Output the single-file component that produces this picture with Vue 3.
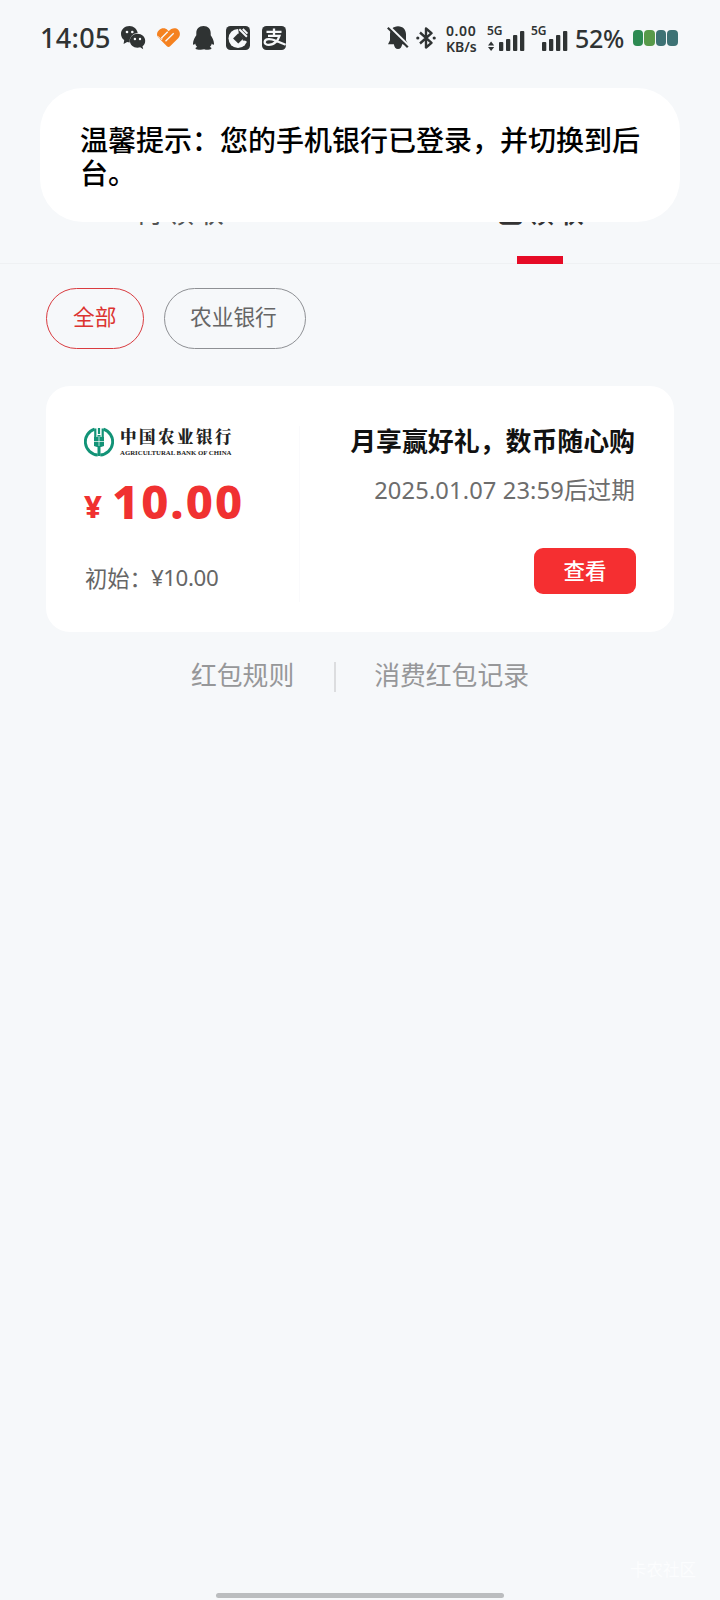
<script setup>
const filters = [
  { label: '全部', active: true },
  { label: '农业银行', active: false },
]
const batteryCells = ['#2d8a52', '#589a49', '#3d7274', '#3d7274']
</script>

<template>
  <div class="screen">
    <header class="status">
      <span class="clock">14:05</span>
      <svg class="wechat" width="25" height="24" viewBox="0 0 25 24">
        <path fill="#2f3333" d="M8.500 0C3.700 0 0 3.500 0 7.900c0 2.600 1.300 4.700 3.200 6.100L2.600 18l3.500-2 2.600.5A8 8 0 0 1 16.700 7.100C16 2.900 12.700 0 8.500 0Z" />
        <path fill="#2f3333" d="M16.500 7.800c-4.300 0-7.600 3-7.600 6.900s3.300 7 7.600 7l2.700-.4 3 1.900-.7-2.900c1.700-1.300 2.700-3.300 2.700-5.600 0-3.900-3.400-6.900-7.700-6.900Z" />
        <g fill="#f6f8fa"><circle cx="6" cy="6" r="1.300" /><circle cx="11.300" cy="6" r="1.300" /><circle cx="13.900" cy="13" r="1.200" /><circle cx="19" cy="13" r="1.200" /></g>
      </svg>
      <svg class="heart" width="24" height="20" viewBox="0 0 24 20">
        <path fill="#f58220" d="M2.200 2C4.500-.2 8.500-.3 10.700 2.300l1 1C14 .3 18.500-.8 21.200 1.800c2.300 2.300 2.200 6.100 0 8.400l-8.100 8c-1 1-2.200 1-3.200 0L6.200 14.500 3.500 11.800.9 9c-1.600-2-1-5 1.300-7Z" />
        <path d="M10.700 3.800 4.200 10.300M16.700 5.300 8.500 13.300" fill="none" stroke="#f6f8fa" stroke-width="1.300" />
        <path d="m.8 8.200 3.200 3.200 1.500-.6" fill="none" stroke="#f6f8fa" stroke-width="1" />
      </svg>
      <svg class="qq" width="21" height="24" viewBox="0 0 21 24">
        <path fill="#2f3333" d="M10.500 0C5.900 0 3.300 3 3.300 7v2.300C1.700 11.800-.1 14.800 0 18.100c.1 1.200 1 1 2.100-.7.400 1.600 1.200 2.700 2.100 3.500-1.500.4-2 1.300-1.400 2.100.8.900 6.300 1 7.700.3 1.400.7 6.900.6 7.700-.3.600-.8.100-1.700-1.400-2.100.9-.8 1.700-1.900 2.100-3.500 1.100 1.700 2 1.900 2.100.7.100-3.300-1.700-6.300-3.300-8.800V7c0-4-2.600-7-7.200-7Z" />
      </svg>
      <svg class="ccb" width="24" height="24" viewBox="0 0 24 24">
        <rect width="24" height="24" rx="4.500" fill="#2f3333" />
        <circle cx="12" cy="12.500" r="9.500" fill="#f6f8fa" />
        <path d="m12.300 7.200 5.200 5.200-5.200 5.200-5.200-5.200Z" fill="#2f3333" />
        <path d="M12 2.500h10v14.200L17 12.400l-4-4Z" fill="#2f3333" />
        <path d="M16.800 13.500h6" stroke="#2f3333" stroke-width="2.200" />
        <path d="m13.300 3.200 7.600 7.600M16.800 3l4.600 4.600" stroke="#f6f8fa" stroke-width="2" />
      </svg>
      <svg class="alipay" width="24" height="24" viewBox="0 0 24 24">
        <rect width="24" height="24" rx="4.500" fill="#2f3333" />
        <path d="M4.500 5.800h15M12 2.500v7M6 9.800h11.500c-1.200 4.200-5 9.100-10.700 9.100-2.200 0-4.300-1-4.100-3 .3-3.800 6.600-3.300 10.500-1.400l10.500 4.300" fill="none" stroke="#f6f8fa" stroke-width="2.300" />
      </svg>
      <svg class="bell" width="22" height="24" viewBox="0 0 22 24">
        <path fill="#2f3333" d="M11 .2c5 0 8 3.600 8 8v6.100l2 4H1l2-4V8.200c0-4.400 3-8 8-8ZM6.800 18h8.400c-.4 3-1.900 5-4.200 5s-3.800-2-4.200-5Z" />
        <path d="M2.500 .8 22 20" stroke="#f6f8fa" stroke-width="2.400" />
        <path d="m.8 1.700 20 19.500" stroke="#2f3333" stroke-width="2.200" />
      </svg>
      <svg class="bluetooth" width="20" height="22" viewBox="0 0 20 22">
        <path d="m4 5.500 11.500 10.300-5.500 4.700V1.500l5.500 4.700L4 16.500" fill="none" stroke="#2f3333" stroke-width="2.400" stroke-linejoin="round" />
        <circle cx="1.800" cy="11" r="1.600" fill="#2f3333" /><circle cx="18.200" cy="11" r="1.600" fill="#2f3333" />
      </svg>
      <div class="speed"><span class="rate">0.00</span><span>KB/s</span></div>
      <div class="signal">
        <span>5G</span>
        <svg width="37" height="21" viewBox="0 0 37 21">
          <path d="m0 15.500 3.100-4 3.100 4ZM0 17l3.100 4 3.100-4Z" fill="#2f3333" />
          <g fill="#2f3333"><rect x="11" y="12" width="4.300" height="9" rx="1" /><rect x="18" y="9" width="4.300" height="12" rx="1" /><rect x="25" y="5" width="4.300" height="16" rx="1" /><rect x="32" y="1" width="4.300" height="20" rx="1" /></g>
        </svg>
      </div>
      <div class="signal second">
        <span>5G</span>
        <svg width="37" height="21" viewBox="0 0 37 21">
          <g fill="#2f3333"><rect x="11" y="12" width="4.300" height="9" rx="1" /><rect x="18" y="9" width="4.300" height="12" rx="1" /><rect x="25" y="5" width="4.300" height="16" rx="1" /><rect x="32" y="1" width="4.300" height="20" rx="1" /></g>
        </svg>
      </div>
      <span class="percent">52%</span>
      <div class="battery"><i v-for="(c, i) in batteryCells" :key="i" :style="{ background: c }"></i></div>
    </header>

    <nav class="tabs">
      <div class="tab">待领取</div>
      <div class="tab active">已领取</div>
    </nav>

    <div class="filters">
      <div v-for="f in filters" :key="f.label" class="chip" :class="{ active: f.active }">{{ f.label }}</div>
    </div>

    <section class="card">
      <div class="left">
        <div class="bank">
          <svg width="30" height="30" viewBox="0 0 30 30">
            <g fill="none" stroke="#129377">
              <path stroke-width="2.900" d="M10.500 2.100A13.300 13.300 0 0 0 13.700 28M19.500 2.100A13.300 13.300 0 0 1 16.300 28" />
              <path stroke-width="2.200" d="M15 1v6M11.300 1.500v8.500M18.700 1.500v8.500" />
              <path stroke-width="3" d="M15 8v21" />
            </g>
            <path fill="#129377" d="M10 10h10v9l-3 1h-4l-3-1Z" />
            <path d="M10 14.500h10M15 9v10" stroke="#fff" stroke-width=".7" />
          </svg>
          <div class="bank-name"><b>中国农业银行</b><small>AGRICULTURAL BANK OF CHINA</small></div>
        </div>
        <div class="amount"><span class="yen">¥</span><span class="num">10.00</span></div>
        <div class="initial"><span>初始：</span><span class="value">¥10.00</span></div>
      </div>
      <div class="right">
        <h2>月享赢好礼，数币随心购</h2>
        <p><span>2025.01.07 23:59</span>后过期</p>
        <button>查看</button>
      </div>
    </section>

    <div class="links"><span>红包规则</span><i></i><span>消费红包记录</span></div>

    <div class="toast">温馨提示：您的手机银行已登录，并切换到后台。</div>
    <div class="watermark">卡农社区</div>
    <div class="home"></div>
  </div>
</template>

<style>
body { background: #f6f8fa; }
</style>
<style scoped>
* { box-sizing: border-box; }
.screen { position: relative; width: 720px; height: 1600px; overflow: hidden; background: #f6f8fa; font-family: "Noto Sans CJK SC", sans-serif; color: #2f3333; }
.status { height: 76px; display: flex; align-items: flex-start; padding-left: 40px; font-family: "Noto Sans", sans-serif; }
.status > * { flex: none; }
.clock { width: 70px; margin-top: 20px; font-size: 27px; line-height: 36px; font-weight: 550; letter-spacing: .3px; }
.wechat { margin: 26px 0 0 11px; }
.heart { margin: 28px 0 0 11px; }
.qq { margin: 26px 0 0 12px; }
.ccb { margin: 26px 0 0 12px; }
.alipay { margin: 26px 0 0 12px; }
.bell { margin: 26px 0 0 101px; }
.bluetooth { margin: 27px 0 0 7px; }
.speed { width: 34px; margin: 23px 0 0 10px; font-size: 14px; font-weight: 650; line-height: 15.500px; display: flex; flex-direction: column; white-space: nowrap; }
.rate { letter-spacing: .6px; }
.signal { position: relative; width: 37px; height: 21px; margin: 30px 0 0 8px; }
.signal svg { display: block; }
.signal span { position: absolute; left: -1px; top: -6px; font-size: 12px; line-height: 14px; font-weight: 600; }
.signal.second { margin-left: 6px; }
.signal.second span { left: 0; }
.percent { width: 50px; margin: 20px 0 0 7px; font-size: 25px; line-height: 36px; font-weight: 500; letter-spacing: -.3px; }
.battery { display: flex; gap: 1px; margin: 30px 0 0 8px; }
.battery i { width: 10.400px; height: 16px; border-radius: 4px; }
.tabs { height: 188px; display: flex; align-items: flex-end; border-bottom: 1px solid #eff1f3; }
.tab { position: relative; width: 360px; height: 76px; text-align: center; font-size: 29px; line-height: 46px; letter-spacing: 1px; color: #555; }
.tab.active { font-weight: 500; color: #333; }
.tab.active::after { content: ""; position: absolute; left: 157px; bottom: -1px; width: 46px; height: 8px; background: #e60b26; }
.filters { display: flex; gap: 20px; padding: 24px 0 0 46px; }
.chip { height: 61px; border: 1px solid #8e9094; border-radius: 31px; padding: 0 25px; font-size: 21.700px; line-height: 54px; color: #666; width: 142px; white-space: nowrap; }
.chip.active { width: 98px; padding-left: 26px; border-color: #d93c40; color: #dc3430; }
.card { display: flex; width: 628px; height: 246px; margin: 37px 0 0 46px; border-radius: 24px; background: #fff; }
.left { position: relative; width: 254px; padding: 41px 0 0 38px; }
.left::after { content: ""; position: absolute; right: 0; top: 40px; width: 1px; height: 176px; background: #fafafc; }
.bank { display: flex; gap: 6px; height: 31px; }
.bank-name { display: flex; flex-direction: column; color: #222; }
.bank-name b { font-family: "Noto Serif CJK SC", "Noto Sans CJK SC", serif; font-weight: 900; font-size: 16.500px; letter-spacing: 2.500px; line-height: 20px; margin-top: -1px; white-space: nowrap; }
.bank-name small { font: bold 6.800px/8px "Liberation Serif", serif; margin-top: 3px; white-space: nowrap; }
.amount { display: flex; align-items: baseline; height: 64px; margin-top: 11px; color: #f03131; font-family: "Noto Sans", sans-serif; font-weight: 800; }
.yen { width: 28px; font-size: 31px; position: relative; left: 0; top: -1px; }
.num { font-size: 47px; line-height: 64px; letter-spacing: 2px; }
.initial { display: flex; margin-top: 29px; padding-left: 1px; font-size: 22.300px; line-height: 32px; color: #666; white-space: nowrap; }
.initial span:first-child { position: relative; top: -1px; }
.initial .value { font-family: "Noto Sans", sans-serif; letter-spacing: -.4px; margin-left: -1px; }
.right { width: 374px; padding: 35px 39px 0 0; display: flex; flex-direction: column; align-items: flex-end; }
h2 { margin: 0; font-size: 25.900px; line-height: 38px; font-weight: 700; color: #111; white-space: nowrap; }
p { margin: 13px 0 0; font-size: 23.700px; line-height: 34px; color: #6d6d6d; white-space: nowrap; }
p span { font-family: "Noto Sans", sans-serif; letter-spacing: .12px; }
button { width: 102px; height: 46px; margin: 41px -1px 0 0; padding: 0 0 3px; border: 0; border-radius: 9px; background: #f52f31; color: #fff; font: 500 21.500px/43px "Noto Sans CJK SC", sans-serif; }
.links { display: flex; align-items: center; height: 40px; margin-top: 25px; padding-left: 191px; font-size: 25.800px; line-height: 38px; color: #969799; }
.links span { position: relative; top: -3px; }
.links i { width: 2px; height: 30px; margin: 0 38px 0 40px; background: #dcdddf; }
.toast { position: absolute; left: 40px; top: 88px; width: 640px; height: 134px; padding: 35px 38px 0 40px; border-radius: 43px; background: #fff; color: #000; font-size: 28px; line-height: 33px; font-weight: 500; }
.watermark { position: absolute; left: 630px; top: 1557px; font-size: 16.500px; line-height: 24px; color: #fcfdfe; }
.home { position: absolute; left: 216px; top: 1593px; width: 288px; height: 5px; border-radius: 3px; background: #bbbdbf; }
</style>
